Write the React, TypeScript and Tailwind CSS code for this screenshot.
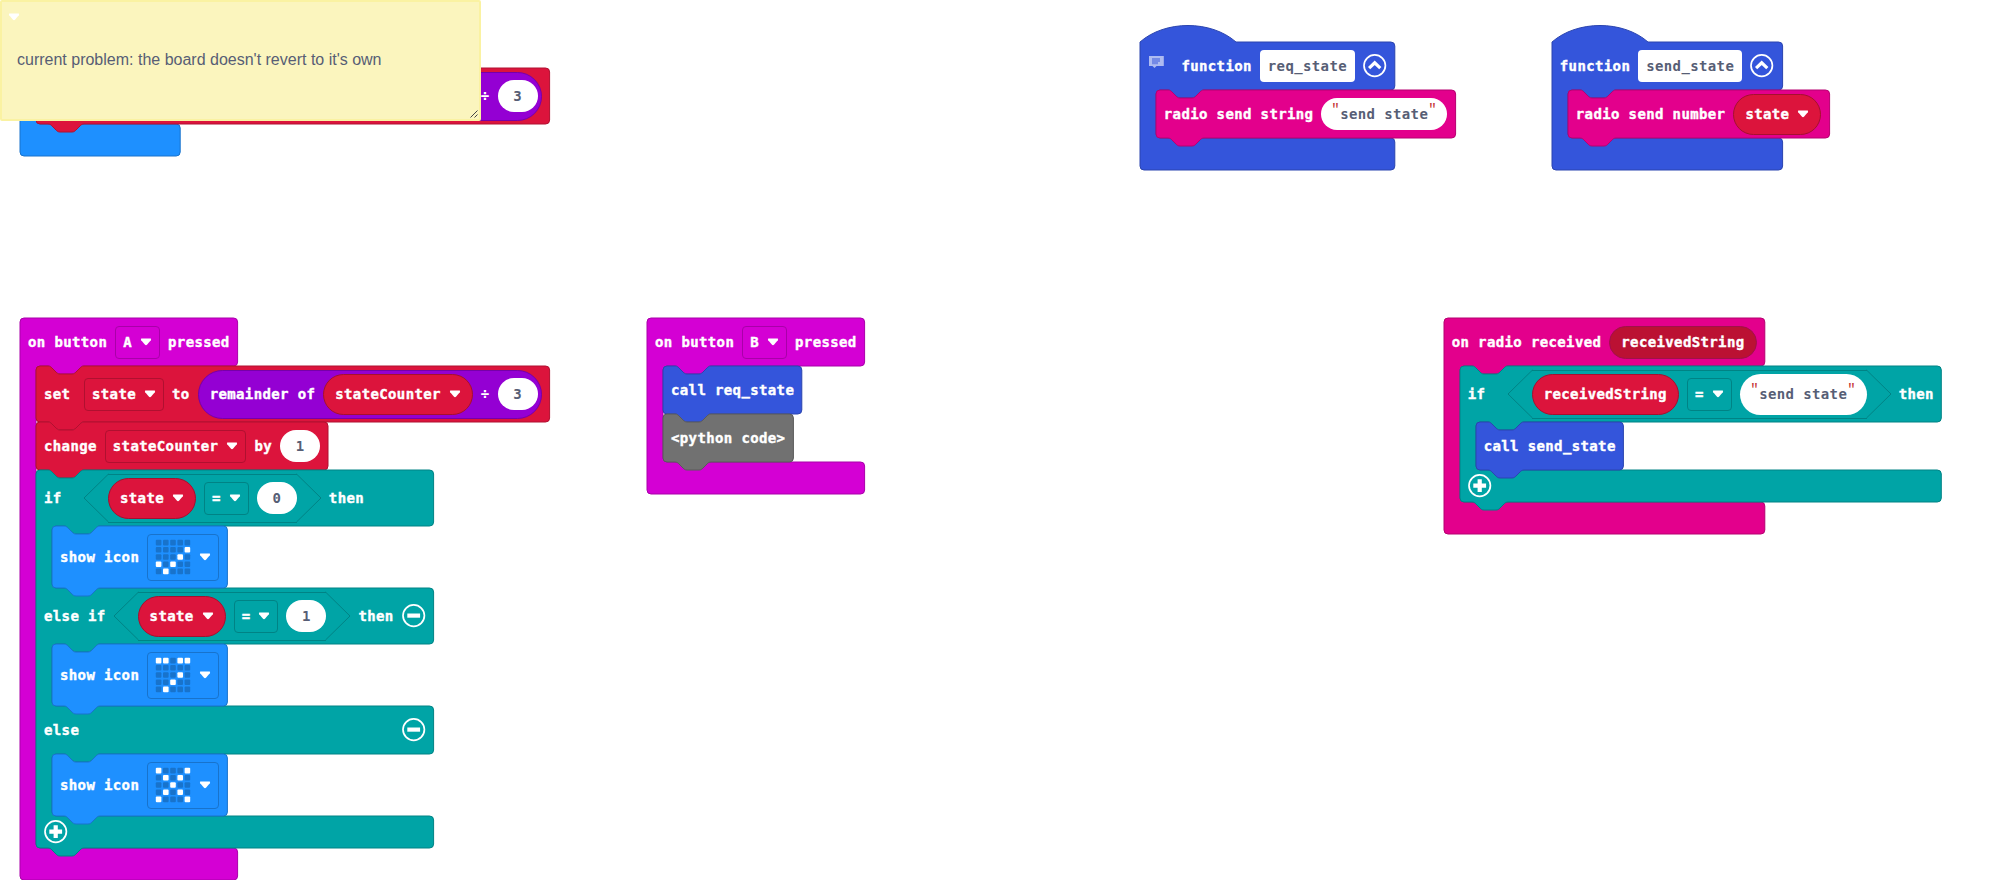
import type { ReactNode } from "react";

const NOTCH = "c2,0 3,1 4,2 l4,4 c1,1 2,2 4,2 h12 c2,0 3,-1 4,-2 l4,-4 c1,-1 2,-2 4,-2";
const NOTCH_BACK = "c-2,0 -3,1 -4,2 l-4,4 c-1,1 -2,2 -4,2 h-12 c-2,0 -3,-1 -4,-2 l-4,-4 c-1,-1 -2,-2 -4,-2";

type Tone = { fill: string; stroke: string };
const tones = {
  input: { fill: "#d400d4", stroke: "#a900a9" },
  variables: { fill: "#dc143c", stroke: "#b01030" },
  logic: { fill: "#00a4a6", stroke: "#008385" },
  basic: { fill: "#1e90ff", stroke: "#1873cc" },
  functions: { fill: "#3455db", stroke: "#2a44af" },
  radio: { fill: "#e3008c", stroke: "#b60070" },
  code: { fill: "#717171", stroke: "#5a5a5a" },
} satisfies Record<string, Tone>;
type ToneName = keyof typeof tones;

type Section = { height: number; slot: number };

function outline(width: number, sections: Section[], footer: number, top: "flat" | "notch" | "hat", tail: boolean) {
  let d = top === "hat" ? "M0,0 c25,-22 71,-22 96,0" : "M0,4 a4,4 0 0 1 4,-4";
  if (top === "notch") d += ` H12 ${NOTCH}`;
  let y = 0;
  sections.forEach((s, i) => {
    d += ` H${width - 4} a4,4 0 0 1 4,4 V${y + s.height - 4}`;
    d += " a4,4 0 0 1 -4,4";
    y += s.height;
    if (s.slot > 0) {
      d += ` H64 ${NOTCH_BACK} H20 a4,4 0 0 0 -4,4 V${y + s.slot - 4} a4,4 0 0 0 4,4`;
      y += s.slot;
      if (i === sections.length - 1) {
        d += ` H${width - 4} a4,4 0 0 1 4,4 V${y + footer - 4} a4,4 0 0 1 -4,4`;
        y += footer;
      }
    }
  });
  if (tail) d += ` H48 ${NOTCH_BACK}`;
  d += " H4 a4,4 0 0 1 -4,-4 Z";
  return d;
}

function Shape({ tone, d }: { tone: ToneName; d: string }) {
  return (
    <svg className="pointer-events-none absolute top-0 left-0 h-px w-px overflow-visible" aria-hidden="true">
      <path d={d} fill={tones[tone].fill} stroke={tones[tone].stroke} />
    </svg>
  );
}

function Statement({ tone, width, height, children }: { tone: ToneName; width: number; height: number; children: ReactNode }) {
  return (
    <div className="relative" style={{ width, height }}>
      <Shape tone={tone} d={outline(width, [{ height, slot: 0 }], 0, "notch", true)} />
      <div className="relative flex h-full items-center gap-2 pl-2">{children}</div>
    </div>
  );
}

type Branch = { height: number; slot: number; head?: ReactNode; body: ReactNode };

function Container({
  tone,
  width,
  top = "flat",
  tail = false,
  branches,
  foot,
}: {
  tone: ToneName;
  width: number;
  top?: "flat" | "notch" | "hat";
  tail?: boolean;
  branches: Branch[];
  foot?: ReactNode;
}) {
  return (
    <div className="relative" style={{ width }}>
      <Shape tone={tone} d={outline(width, branches, 32, top, tail)} />
      {branches.map((b, i) => (
        <div key={i} className="relative">
          <div className="flex items-center gap-2 px-2" style={{ height: b.height }}>
            {b.head}
          </div>
          <div className="relative z-10 ml-4" style={{ height: b.slot }}>
            {b.body}
          </div>
        </div>
      ))}
      <div className="relative flex h-8 items-center px-2">{foot}</div>
    </div>
  );
}

function Label({ children, first = false }: { children: ReactNode; first?: boolean }) {
  return <span className={first ? "min-w-8 shrink-0 whitespace-pre" : "shrink-0 whitespace-pre"}>{children}</span>;
}

function Caret() {
  return (
    <svg className="h-2 w-3 shrink-0" viewBox="0 0 12 8" aria-hidden="true">
      <path d="M1.4,.5 H10.6 Q11.5,.9 10.8,2.2 L7.2,6.6 Q6,7.7 4.8,6.6 L1.2,2.2 Q.5,.9 1.4,.5 Z" fill="#fff" />
    </svg>
  );
}

function Dropdown({ tone, children }: { tone: "input" | "variables" | "logic"; children: ReactNode }) {
  const border = { input: "border-[#a900a9]", variables: "border-[#b01030]", logic: "border-[#008385]" }[tone];
  return (
    <span className={`flex h-[33px] shrink-0 items-center gap-2 rounded border px-[7px] ${border}`}>
      {children}
      <Caret />
    </span>
  );
}

function Variable({ children, menu = true }: { children: ReactNode; menu?: boolean }) {
  return (
    <span className="flex h-[41px] shrink-0 items-center gap-2 rounded-full border border-[#a5102f] bg-[#dc143c] px-[11px]">
      {children}
      {menu && <Caret />}
    </span>
  );
}

function NumberInput({ children }: { children: ReactNode }) {
  return (
    <span className="flex h-8 w-10 shrink-0 items-center justify-center rounded-full bg-white text-[#575e75] [-webkit-text-stroke:0px]">
      {children}
    </span>
  );
}

function TextInput({ children, tall = false }: { children: string; tall?: boolean }) {
  return (
    <span
      className={`flex shrink-0 items-center justify-center rounded-full bg-white text-[#575e75] [-webkit-text-stroke:0px] ${tall ? "h-[41px] w-[127px]" : "h-8 w-[125.6px]"}`}
    >
      <Quote side="left" />
      {children}
      <Quote side="right" />
    </span>
  );
}

function Quote({ side }: { side: "left" | "right" }) {
  return (
    <span
      className={`w-2 -translate-y-1 font-['Liberation_Mono',monospace] font-normal tracking-normal text-[#c43030] ${side === "left" ? "-indent-px text-left" : "text-right"}`}
    >
      "
    </span>
  );
}

function NameInput({ children }: { children: string }) {
  return (
    <span className="flex h-8 shrink-0 items-center rounded bg-white px-2 text-[#575e75] [-webkit-text-stroke:0px]">{children}</span>
  );
}

function RoundIcon({ kind }: { kind: "plus" | "minus" | "up" }) {
  return (
    <svg className="size-6 shrink-0" viewBox="0.3 0.4 24 24" fill="none" stroke="#fff" aria-hidden="true">
      <circle cx="12" cy="12" r="10.7" strokeWidth="1.7" />
      {kind === "plus" && <path d="M12,5.6 V18.4 M5.6,12 H18.4" strokeWidth="4.2" />}
      {kind === "minus" && <path d="M5.6,12 H18.4" strokeWidth="4.2" />}
      {kind === "up" && <path d="M6.4,14.6 L12,9.2 L17.6,14.6" strokeWidth="3.2" />}
    </svg>
  );
}

function CommentIcon() {
  return (
    <svg className="mr-[9.6px] -mt-2 h-[14px] w-4 shrink-0" viewBox="0 0 16 14" aria-hidden="true">
      <path d="M1,1 H15.8 V11 H8.5 L6.5,13 L4.5,11 H1 Z" fill="#aebbf1" />
      <path d="M4,3 H12 V7 H10 V9.3 H4 Z" fill="#7489e6" />
    </svg>
  );
}

function Comparison({ left, right }: { left: ReactNode; right: ReactNode }) {
  return (
    <span className="relative flex h-12 shrink-0 items-center px-6">
      <svg className="absolute inset-y-0 left-0 h-12 w-6 overflow-visible" aria-hidden="true">
        <path d="M24.5,0 L0,24 L24.5,48" fill="none" stroke="#008385" />
      </svg>
      <span className="flex h-[49px] items-center gap-2 border-y border-[#008385]">
        {left}
        <Dropdown tone="logic">
          <Label>=</Label>
        </Dropdown>
        {right}
      </span>
      <svg className="absolute inset-y-0 right-0 h-12 w-6 overflow-visible" aria-hidden="true">
        <path d="M-.5,0 L24,24 L-.5,48" fill="none" stroke="#008385" />
      </svg>
    </span>
  );
}

function ShowIcon({ pattern }: { pattern: string }) {
  return (
    <Statement tone="basic" width={175.4} height={62}>
      <Label>show icon</Label>
      <span className="flex h-[47px] items-center gap-2 rounded border border-[#1873cc] px-[7px]">
        <svg className="size-9 shrink-0" viewBox="0 0 36 36" aria-hidden="true">
          {pattern.split("").map((c, i) => (
            <rect
              key={i}
              x={0.8 + (i % 5) * 7.2}
              y={0.8 + Math.floor(i / 5) * 7.2}
              width="5.6"
              height="5.6"
              rx="1"
              fill={c === "#" ? "#fff" : "#1873cc"}
            />
          ))}
        </svg>
        <Caret />
      </span>
    </Statement>
  );
}

function SetState() {
  return (
    <Statement tone="variables" width={513.6} height={56}>
      <Label first>set</Label>
      <Dropdown tone="variables">state</Dropdown>
      <Label>to</Label>
      <span className="flex h-[49px] items-center gap-2 rounded-full border border-[#7600a8] bg-[#9400d3] pr-[3px] pl-[11px]">
        <Label>remainder of</Label>
        <Variable>stateCounter</Variable>
        <span className="[-webkit-text-stroke:0px]">÷</span>
        <NumberInput>3</NumberInput>
      </span>
    </Statement>
  );
}

function ButtonEvent({ button, slot, children }: { button: string; slot: number; children: ReactNode }) {
  return (
    <Container
      tone="input"
      width={217.6}
      branches={[
        {
          height: 48,
          slot,
          head: (
            <>
              <Label>on button</Label>
              <Dropdown tone="input">{button}</Dropdown>
              <Label>pressed</Label>
            </>
          ),
          body: children,
        },
      ]}
    />
  );
}

function StateIs({ value }: { value: string }) {
  return <Comparison left={<Variable>state</Variable>} right={<NumberInput>{value}</NumberInput>} />;
}

function FunctionDef({ name, width, comment = false, children }: { name: string; width: number; comment?: boolean; children: ReactNode }) {
  return (
    <Container
      tone="functions"
      width={width}
      top="hat"
      branches={[
        {
          height: 48,
          slot: 48,
          head: (
            <>
              {comment && <CommentIcon />}
              <Label>function</Label>
              <NameInput>{name}</NameInput>
              <RoundIcon kind="up" />
            </>
          ),
          body: children,
        },
      ]}
    />
  );
}

export default function App() {
  return (
    <main className="relative h-[880px] w-[1993px] overflow-hidden bg-white font-['DejaVu_Sans_Mono',monospace] text-[14px] leading-5 font-bold tracking-[.372px] text-white [-webkit-text-stroke:.4px]">
      <div className="absolute top-5 left-5">
        <Container tone="basic" width={160.2} branches={[{ height: 48, slot: 56, body: <SetState /> }]} />
      </div>

      <section className="absolute top-0 left-0 z-20 h-[121px] w-[481px] rounded-[2px] border-2 border-[#faf2a2] bg-[#fbf5be] px-[15px] pt-[47px] font-['Liberation_Sans',sans-serif] text-[16px] leading-[22px] font-normal tracking-normal text-[#575e75] [-webkit-text-stroke:0px]">
        <span className="absolute top-[11px] left-[6px] flex">
          <Caret />
        </span>
        <p className="whitespace-nowrap">current problem: the board doesn't revert to it's own</p>
        <svg className="absolute right-[1px] bottom-[1px] size-2" viewBox="0 0 8 8" stroke="#444" aria-hidden="true">
          <path d="M.5,7.5 L7.5,.5 M4.5,7.5 L7.5,4.5" />
        </svg>
      </section>

      <div className="absolute top-[42px] left-[1139.8px]">
        <FunctionDef name="req_state" width={254.8} comment>
          <Statement tone="radio" width={299.6} height={48}>
            <Label>radio send string</Label>
            <TextInput>send state</TextInput>
          </Statement>
        </FunctionDef>
      </div>

      <div className="absolute top-[42px] left-[1551.8px]">
        <FunctionDef name="send_state" width={230.6}>
          <Statement tone="radio" width={261.6} height={48}>
            <Label>radio send number</Label>
            <Variable>state</Variable>
          </Statement>
        </FunctionDef>
      </div>

      <div className="absolute top-[318px] left-5">
        <ButtonEvent button="A" slot={482}>
          <SetState />
          <Statement tone="variables" width={292} height={48}>
            <Label>change</Label>
            <Dropdown tone="variables">stateCounter</Dropdown>
            <Label>by</Label>
            <NumberInput>1</NumberInput>
          </Statement>
          <Container
            tone="logic"
            width={397.6}
            top="notch"
            tail
            branches={[
              {
                height: 56,
                slot: 62,
                head: (
                  <>
                    <Label first>if</Label>
                    <StateIs value="0" />
                    <Label>then</Label>
                  </>
                ),
                body: <ShowIcon pattern=".........#...#.#.#...#..." />,
              },
              {
                height: 56,
                slot: 62,
                head: (
                  <>
                    <Label>else if</Label>
                    <StateIs value="1" />
                    <Label>then</Label>
                    <RoundIcon kind="minus" />
                  </>
                ),
                body: <ShowIcon pattern="##.##........#...#...#..." />,
              },
              {
                height: 48,
                slot: 62,
                head: (
                  <>
                    <Label>else</Label>
                    <span className="ml-auto flex">
                      <RoundIcon kind="minus" />
                    </span>
                  </>
                ),
                body: <ShowIcon pattern="#...#.#.#...#...#.#.#...#" />,
              },
            ]}
            foot={<RoundIcon kind="plus" />}
          />
        </ButtonEvent>
      </div>

      <div className="absolute top-[318px] left-[647px]">
        <ButtonEvent button="B" slot={96}>
          <Statement tone="functions" width={138.8} height={48}>
            <Label>call req_state</Label>
          </Statement>
          <Statement tone="code" width={130.4} height={48}>
            <Label>{"<python code>"}</Label>
          </Statement>
        </ButtonEvent>
      </div>

      <div className="absolute top-[318px] left-[1443.7px]">
        <Container
          tone="radio"
          width={320.8}
          branches={[
            {
              height: 48,
              slot: 136,
              head: (
                <>
                  <Label>on radio received</Label>
                  <span className="flex h-[33px] items-center rounded-full border border-[#a0104a] bg-[#bb1133] px-[11px]">
                    receivedString
                  </span>
                </>
              ),
              body: (
                <Container
                  tone="logic"
                  width={481.3}
                  top="notch"
                  tail
                  branches={[
                    {
                      height: 56,
                      slot: 48,
                      head: (
                        <>
                          <Label first>if</Label>
                          <Comparison left={<Variable menu={false}>receivedString</Variable>} right={<TextInput tall>send state</TextInput>} />
                          <Label>then</Label>
                        </>
                      ),
                      body: (
                        <Statement tone="functions" width={147.4} height={48}>
                          <Label>call send_state</Label>
                        </Statement>
                      ),
                    },
                  ]}
                  foot={<RoundIcon kind="plus" />}
                />
              ),
            },
          ]}
        />
      </div>
    </main>
  );
}
